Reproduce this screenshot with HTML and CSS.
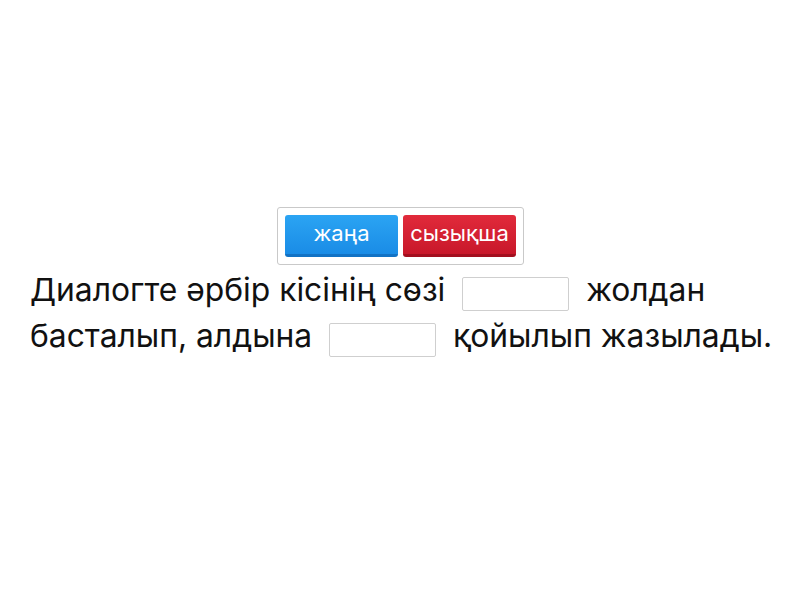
FILE: index.html
```html
<!DOCTYPE html>
<html lang="kk">
<head>
<meta charset="utf-8">
<link rel="stylesheet" href="styles.css">
</head>
<body>
<main class="page">
  <div class="bank">
    <div class="chips">
      <span class="chip chip-blue">жаңа</span>
      <span class="chip chip-red">сызықша</span>
    </div>
  </div>
  <p class="text">Диалогте әрбір кісінің сөзі <span class="blank"></span> жолдан басталып, алдына <span class="blank"></span> қойылып жазылады.</p>
</main>
</body>
</html>
```
FILE: styles.css
```css
html, body {
  margin: 0;
  padding: 0;
  background: #fff;
}
body {
  font-family: Inter, "Noto Sans", sans-serif;
  color: #111;
}
.page {
  width: 800px;
  height: 600px;
  box-sizing: border-box;
  padding-top: 207px;
}
.bank {
  display: flex;
  justify-content: center;
  padding-left: 1px;
}
.chips {
  display: flex;
  gap: 5px;
  padding: 7px;
  border: 1px solid #c9c9c9;
  border-radius: 3px;
}
.chip {
  display: flex;
  align-items: center;
  justify-content: center;
  width: 113px;
  height: 42px;
  box-sizing: border-box;
  border-radius: 3px;
  color: #fff;
  font-size: 22px;
  padding-bottom: 4px;
}
.chip-blue {
  background: linear-gradient(#2ba4f3, #1a8ce6);
  border-bottom: 3px solid #1272c4;
}
.chip-red {
  background: linear-gradient(#e12a3b, #c8182a);
  border-bottom: 3px solid #a30f1e;
}
.text {
  margin: 2px 16px 0 30px;
  font-size: 31.8px;
  line-height: 46px;
  letter-spacing: 0;
}
.blank {
  display: inline-block;
  width: 107px;
  height: 34px;
  box-sizing: border-box;
  border: 1px solid #cfcfcf;
  border-radius: 2px;
  margin: 0 8px;
  vertical-align: -10px;
}
```
